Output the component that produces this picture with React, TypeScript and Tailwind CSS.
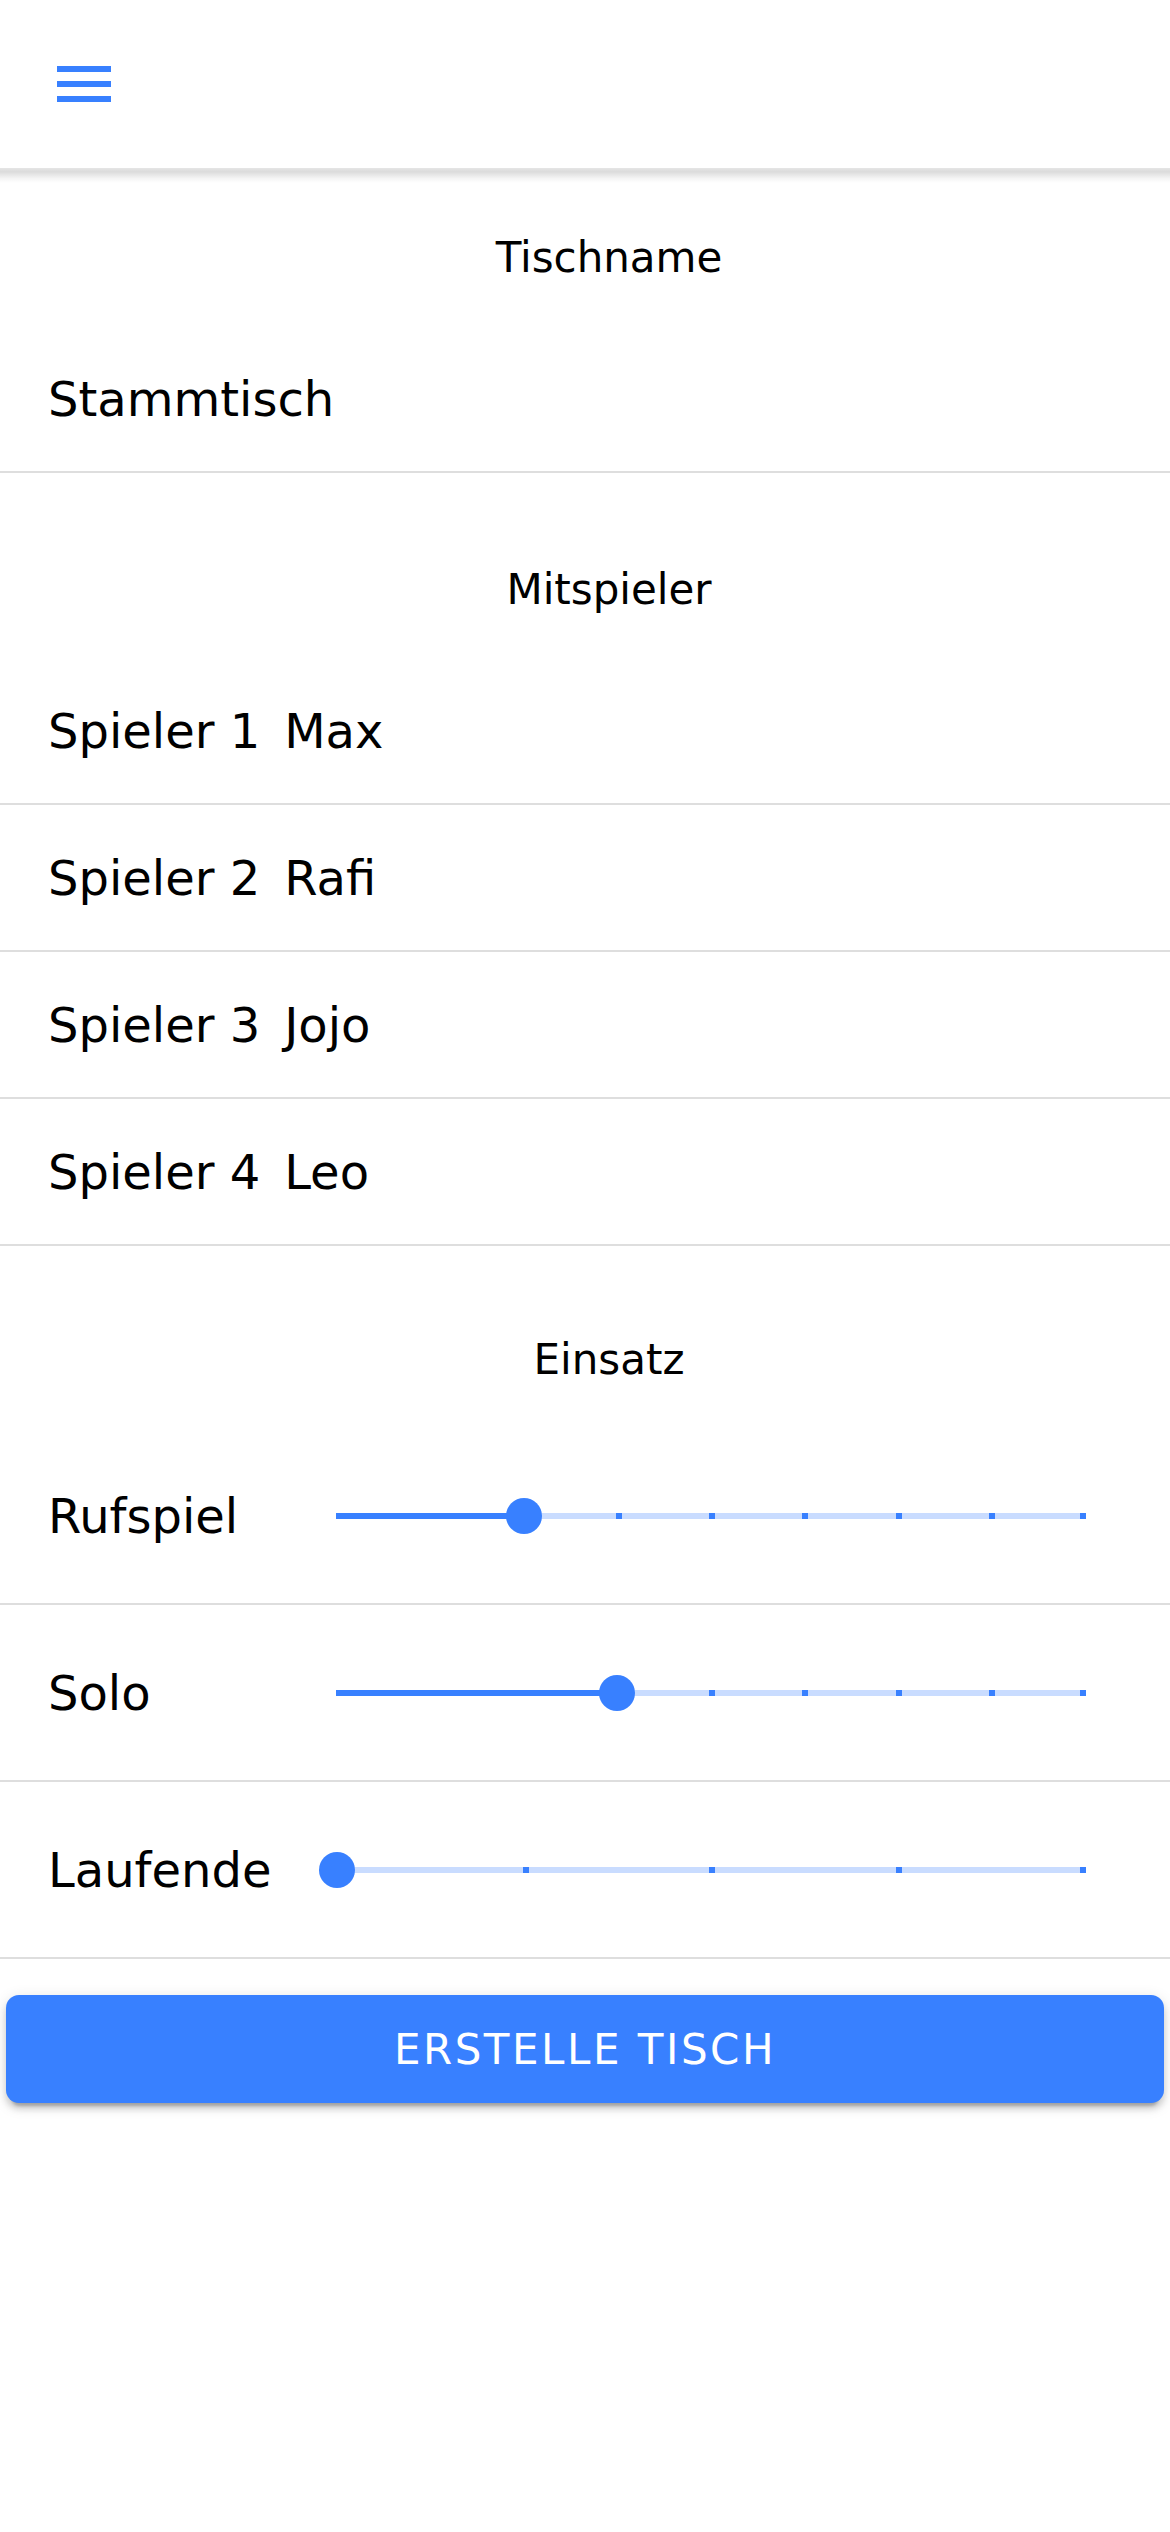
import React from "react";

const FONT = { fontFamily: '"DejaVu Sans", "Liberation Sans", sans-serif' };

function SectionLabel({ text, mt }: { text: string; mt: string }) {
  return (
    <div className={`${mt} h-[158px] pl-[48px] pt-[66px]`}>
      <div className="text-center text-[42px] leading-[48px] text-black">{text}</div>
    </div>
  );
}

function Slider({ steps, value }: { steps: number; value: number }) {
  const pct = (i: number) => (i / steps) * 100;
  const ticks = Array.from({ length: steps + 1 }, (_, i) => i);
  return (
    <div className="relative h-[36px] flex-1 mr-[86px]">
      <div className="absolute left-0 right-0 top-[15px] h-[6px] bg-[#c9dcff]" />
      <div
        className="absolute left-0 top-[15px] h-[6px] bg-[#3880ff]"
        style={{ width: `${pct(value)}%` }}
      />
      {ticks.map((i) => (
        <div
          key={i}
          className="absolute top-[15px] h-[6px] w-[6px] bg-[#3880ff]"
          style={{ left: `calc(${pct(i)}% - ${i === steps ? 4 : 2}px)` }}
        />
      ))}
      <div
        className="absolute top-0 h-[36px] w-[36px] rounded-full bg-[#3880ff]"
        style={{ left: `calc(${pct(value)}% - 19px)` }}
      />
    </div>
  );
}

export default function App() {
  const players = [
    ["Spieler 1", "Max"],
    ["Spieler 2", "Rafi"],
    ["Spieler 3", "Jojo"],
    ["Spieler 4", "Leo"],
  ];
  const sliders: [string, number, number][] = [
    ["Rufspiel", 8, 2],
    ["Solo", 8, 3],
    ["Laufende", 4, 0],
  ];
  return (
    <div className="min-h-[2532px] w-[1170px] bg-white text-black" style={FONT}>
      <div className="relative z-10 flex h-[168px] items-center bg-white pl-[48px]">
        <svg width="72" height="72" viewBox="0 0 24 24" fill="#3880ff">
          <path d="M3 18h18v-2H3v2zm0-5h18v-2H3v2zm0-7v2h18V6H3z" />
        </svg>
        <div className="absolute left-0 right-0 top-full h-[15px] bg-[linear-gradient(to_bottom,rgba(0,0,0,0.10),rgba(0,0,0,0.14)_25%,rgba(0,0,0,0.04)_70%,rgba(0,0,0,0))]" />
      </div>

      <SectionLabel text="Tischname" mt="mt-0" />
      <div className="flex h-[147px] items-center border-b-2 border-[#dedede] pl-[48px] text-[48px]">
        Stammtisch
      </div>

      <SectionLabel text="Mitspieler" mt="mt-[27px]" />
      {players.map(([label, name]) => (
        <div
          key={label}
          className="flex h-[147px] items-center gap-[24px] border-b-2 border-[#dedede] pl-[48px] text-[48px]"
        >
          <span>{label}</span>
          <span>{name}</span>
        </div>
      ))}

      <SectionLabel text="Einsatz" mt="mt-[24px]" />
      {sliders.map(([label, steps, value]) => (
        <div
          key={label}
          className="flex h-[177px] items-center border-b-2 border-[#dedede] pl-[48px] text-[48px]"
        >
          <span className="w-[290px] shrink-0">{label}</span>
          <Slider steps={steps} value={value} />
        </div>
      ))}

      <div className="mx-[6px] mt-[36px] flex h-[108px] items-center justify-center rounded-[13px] bg-[#3880ff] text-[42px] tracking-[0.06em] text-white shadow-[0_9px_3px_-6px_rgba(0,0,0,0.2),0_6px_6px_0_rgba(0,0,0,0.14),0_3px_15px_0_rgba(0,0,0,0.12)]">
        ERSTELLE TISCH
      </div>
    </div>
  );
}
